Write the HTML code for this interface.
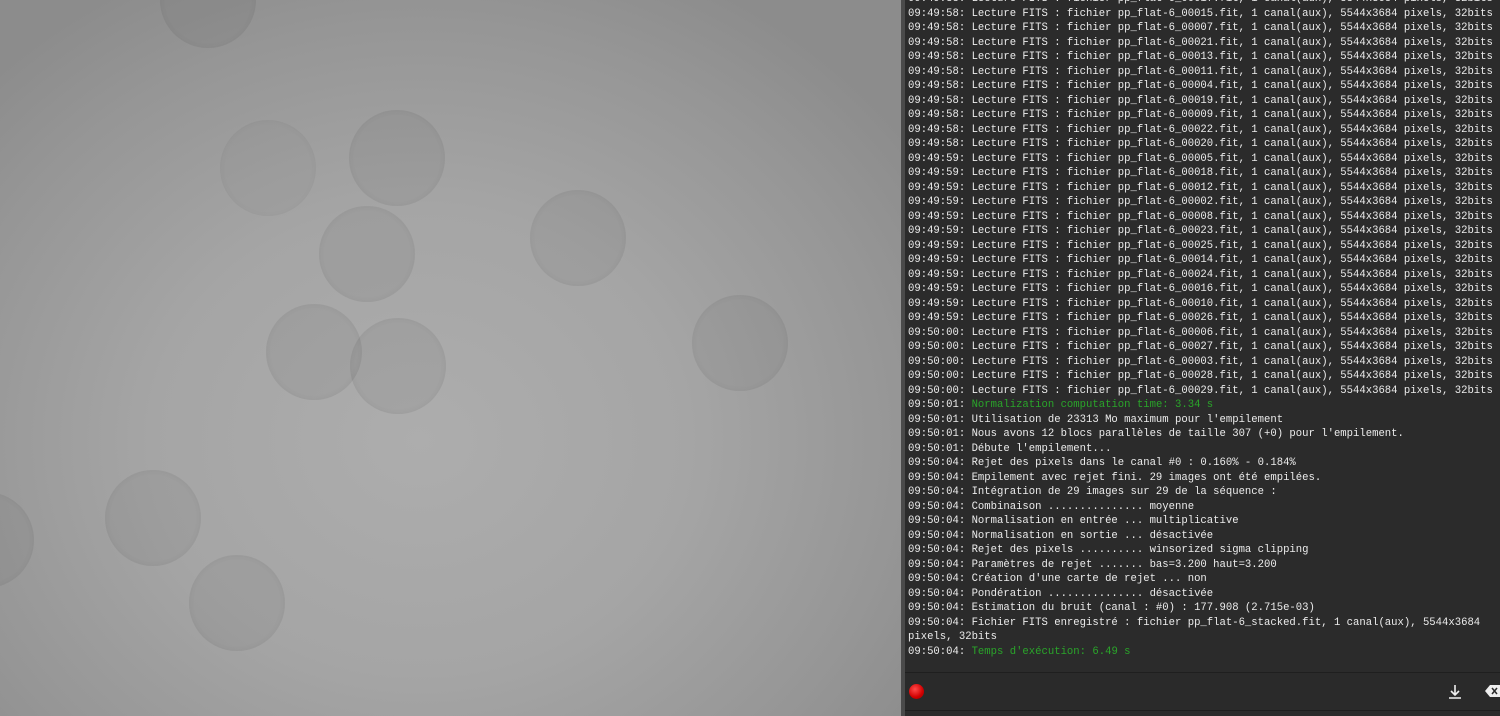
<!DOCTYPE html>
<html><head><meta charset="utf-8"><style>
*{margin:0;padding:0;box-sizing:border-box}
body{width:1500px;height:716px;overflow:hidden;background:#2b2b2b;position:relative}
#img{position:absolute;left:0;top:0;width:901px;height:716px;background:radial-gradient(ellipse 600px 520px at 420px 440px,#adadad 0%,#a5a5a5 45%,#969696 80%,#8c8c8c 100%)}
.d{position:absolute;width:96px;height:96px;border-radius:50%;background:rgba(80,80,80,.09);box-shadow:inset 0 0 6px rgba(60,60,60,.08)}
#sep{position:absolute;left:901px;top:0;width:4px;height:716px;background:#4a4a4a}
#log{position:absolute;left:908px;top:-8px;width:592px;font-family:"Liberation Mono",monospace;font-size:10.6px;line-height:14.5px;color:#ececec;white-space:pre}
.g{color:#2aa52a}
#bar{position:absolute;left:905px;top:672px;width:595px;height:38px;background:#2a2a2a;border-top:1px solid #1f1f1f}
#bot{position:absolute;left:905px;top:710px;width:595px;height:6px;background:#2b2b2b;border-top:1px solid #1e1e1e}
.rec{position:absolute;left:4px;top:11px;width:15px;height:15px;border-radius:50%;background:radial-gradient(circle at 40% 35%,#ff4a4a,#d00000 60%,#900 100%)}
</style></head><body>
<div id="img">
<div class="d" style="left:160px;top:-48px"></div>
<div class="d" style="left:220px;top:120px;opacity:.6"></div>
<div class="d" style="left:349px;top:110px"></div>
<div class="d" style="left:319px;top:206px"></div>
<div class="d" style="left:266px;top:304px"></div>
<div class="d" style="left:350px;top:318px"></div>
<div class="d" style="left:530px;top:190px"></div>
<div class="d" style="left:692px;top:295px"></div>
<div class="d" style="left:105px;top:470px"></div>
<div class="d" style="left:189px;top:555px"></div>
<div class="d" style="left:-62px;top:492px"></div>
</div>
<div id="sep"></div>
<div id="log">09:49:58: Lecture FITS : fichier pp_flat-6_00017.fit, 1 canal(aux), 5544x3684 pixels, 32bits
09:49:58: Lecture FITS : fichier pp_flat-6_00015.fit, 1 canal(aux), 5544x3684 pixels, 32bits
09:49:58: Lecture FITS : fichier pp_flat-6_00007.fit, 1 canal(aux), 5544x3684 pixels, 32bits
09:49:58: Lecture FITS : fichier pp_flat-6_00021.fit, 1 canal(aux), 5544x3684 pixels, 32bits
09:49:58: Lecture FITS : fichier pp_flat-6_00013.fit, 1 canal(aux), 5544x3684 pixels, 32bits
09:49:58: Lecture FITS : fichier pp_flat-6_00011.fit, 1 canal(aux), 5544x3684 pixels, 32bits
09:49:58: Lecture FITS : fichier pp_flat-6_00004.fit, 1 canal(aux), 5544x3684 pixels, 32bits
09:49:58: Lecture FITS : fichier pp_flat-6_00019.fit, 1 canal(aux), 5544x3684 pixels, 32bits
09:49:58: Lecture FITS : fichier pp_flat-6_00009.fit, 1 canal(aux), 5544x3684 pixels, 32bits
09:49:58: Lecture FITS : fichier pp_flat-6_00022.fit, 1 canal(aux), 5544x3684 pixels, 32bits
09:49:58: Lecture FITS : fichier pp_flat-6_00020.fit, 1 canal(aux), 5544x3684 pixels, 32bits
09:49:59: Lecture FITS : fichier pp_flat-6_00005.fit, 1 canal(aux), 5544x3684 pixels, 32bits
09:49:59: Lecture FITS : fichier pp_flat-6_00018.fit, 1 canal(aux), 5544x3684 pixels, 32bits
09:49:59: Lecture FITS : fichier pp_flat-6_00012.fit, 1 canal(aux), 5544x3684 pixels, 32bits
09:49:59: Lecture FITS : fichier pp_flat-6_00002.fit, 1 canal(aux), 5544x3684 pixels, 32bits
09:49:59: Lecture FITS : fichier pp_flat-6_00008.fit, 1 canal(aux), 5544x3684 pixels, 32bits
09:49:59: Lecture FITS : fichier pp_flat-6_00023.fit, 1 canal(aux), 5544x3684 pixels, 32bits
09:49:59: Lecture FITS : fichier pp_flat-6_00025.fit, 1 canal(aux), 5544x3684 pixels, 32bits
09:49:59: Lecture FITS : fichier pp_flat-6_00014.fit, 1 canal(aux), 5544x3684 pixels, 32bits
09:49:59: Lecture FITS : fichier pp_flat-6_00024.fit, 1 canal(aux), 5544x3684 pixels, 32bits
09:49:59: Lecture FITS : fichier pp_flat-6_00016.fit, 1 canal(aux), 5544x3684 pixels, 32bits
09:49:59: Lecture FITS : fichier pp_flat-6_00010.fit, 1 canal(aux), 5544x3684 pixels, 32bits
09:49:59: Lecture FITS : fichier pp_flat-6_00026.fit, 1 canal(aux), 5544x3684 pixels, 32bits
09:50:00: Lecture FITS : fichier pp_flat-6_00006.fit, 1 canal(aux), 5544x3684 pixels, 32bits
09:50:00: Lecture FITS : fichier pp_flat-6_00027.fit, 1 canal(aux), 5544x3684 pixels, 32bits
09:50:00: Lecture FITS : fichier pp_flat-6_00003.fit, 1 canal(aux), 5544x3684 pixels, 32bits
09:50:00: Lecture FITS : fichier pp_flat-6_00028.fit, 1 canal(aux), 5544x3684 pixels, 32bits
09:50:00: Lecture FITS : fichier pp_flat-6_00029.fit, 1 canal(aux), 5544x3684 pixels, 32bits
09:50:01: <span class="g">Normalization computation time: 3.34 s</span>
09:50:01: Utilisation de 23313 Mo maximum pour l'empilement
09:50:01: Nous avons 12 blocs parallèles de taille 307 (+0) pour l'empilement.
09:50:01: Débute l'empilement...
09:50:04: Rejet des pixels dans le canal #0 : 0.160% - 0.184%
09:50:04: Empilement avec rejet fini. 29 images ont été empilées.
09:50:04: Intégration de 29 images sur 29 de la séquence :
09:50:04: Combinaison ............... moyenne
09:50:04: Normalisation en entrée ... multiplicative
09:50:04: Normalisation en sortie ... désactivée
09:50:04: Rejet des pixels .......... winsorized sigma clipping
09:50:04: Paramètres de rejet ....... bas=3.200 haut=3.200
09:50:04: Création d'une carte de rejet ... non
09:50:04: Pondération ............... désactivée
09:50:04: Estimation du bruit (canal : #0) : 177.908 (2.715e-03)
09:50:04: Fichier FITS enregistré : fichier pp_flat-6_stacked.fit, 1 canal(aux), 5544x3684
pixels, 32bits
09:50:04: <span class="g">Temps d'exécution: 6.49 s</span></div>
<div id="bar"><div class="rec"></div>
<svg style="position:absolute;left:543px;top:11px" width="14" height="16" viewBox="0 0 14 16"><path d="M7 1v10M3 7l4 4 4-4M1 14h12" stroke="#eee" stroke-width="1.6" fill="none"/></svg>
<svg style="position:absolute;left:580px;top:11px" width="15" height="14" viewBox="0 0 15 14"><path d="M5 1h10v12H5L0 7z" fill="#eee"/><path d="M7 4l5 6M12 4l-5 6" stroke="#2a2a2a" stroke-width="1.5"/></svg>
</div>
<div id="bot"></div>
</body></html>
